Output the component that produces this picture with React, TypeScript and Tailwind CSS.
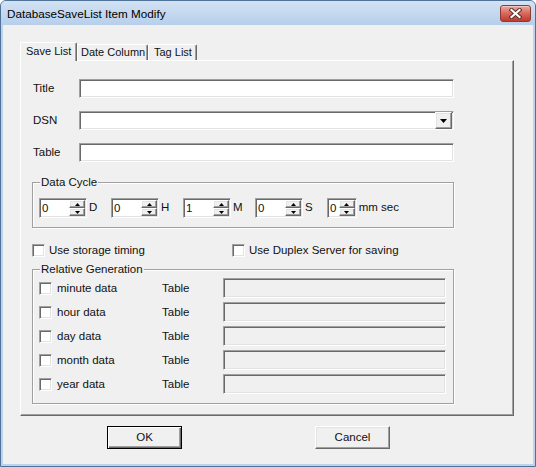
import React from 'react';

// classic 3D edges
const sunken =
  'border border-t-[#a0a0a0] border-l-[#a0a0a0] border-r-white border-b-white shadow-[inset_1px_1px_0_#696969,inset_-1px_-1px_0_#e3e3e3]';
const raised =
  'border border-t-white border-l-white border-r-[#696969] border-b-[#696969] shadow-[inset_-1px_-1px_0_#a0a0a0,inset_1px_1px_0_#e3e3e3]';
const etched = 'border border-[#a0a0a0] shadow-[inset_1px_1px_0_#fff,1px_1px_0_#fff]';

const CloseButton = () => (
  <div className="w-[31px] h-[17px] rounded-[3px] border border-[#8a3b33] bg-gradient-to-b from-[#e9a99f] via-[#d7685b] to-[#c0392b] shadow-[inset_0_1px_0_#f3c9c2] flex items-center justify-center">
    <svg width="13" height="11" viewBox="0 0 13 11">
      <path d="M2.5 2 L10.5 9 M10.5 2 L2.5 9" stroke="#5a2a26" strokeWidth="4" strokeLinecap="square" />
      <path d="M2.5 2 L10.5 9 M10.5 2 L2.5 9" stroke="#ffffff" strokeWidth="2.2" strokeLinecap="square" />
    </svg>
  </div>
);

const Arrow = ({ up }: { up?: boolean }) => (
  <svg width="5" height="3" viewBox="0 0 5 3">
    <path d={up ? 'M2.5 0 L5 3 L0 3 Z' : 'M0 0 L5 0 L2.5 3 Z'} fill="#000" />
  </svg>
);

const Spinner = ({ value }: { value: string }) => (
  <div className={`w-[48px] h-[20px] bg-white flex items-center pl-[2px] pr-px ${sunken}`}>
    <span className="flex-1 leading-[13px]">{value}</span>
    <div className="w-[16px] h-[16px] flex flex-col">
      <div className={`flex-1 bg-[#f0f0f0] flex items-center justify-center ${raised}`}>
        <Arrow up />
      </div>
      <div className={`flex-1 bg-[#f0f0f0] flex items-center justify-center ${raised}`}>
        <Arrow />
      </div>
    </div>
  </div>
);

const CheckBox = () => <div className={`w-[13px] h-[13px] bg-white shrink-0 ${sunken}`} />;

const GroupLabel = ({ text }: { text: string }) => (
  <span className="absolute left-[7px] -top-[7px] bg-[#f0f0f0] px-px leading-[13px]">{text}</span>
);

const cycle = [
  { v: '0', u: 'D' },
  { v: '0', u: 'H' },
  { v: '1', u: 'M' },
  { v: '0', u: 'S' },
  { v: '0', u: 'mm sec' },
];

const relative = ['minute data', 'hour data', 'day data', 'month data', 'year data'];

export default function App() {
  return (
    <div className="w-[536px] h-[467px] font-['Liberation_Sans',Arial,sans-serif] text-[11.5px] text-[#111]">
      <div className="w-full h-full flex flex-col rounded-t-[6px] border border-[#4f7299] bg-[#bdd3ec]">
        {/* Title bar */}
        <div className="h-[24px] flex items-center pl-[6px] pr-[4px] rounded-t-[5px] bg-gradient-to-b from-[#d3e2f4] to-[#b7cfea]">
          <span className="flex-1 text-[11.7px] text-black mt-[2px]">DatabaseSaveList Item Modify</span>
          <div className="self-start mt-[4px]">
            <CloseButton />
          </div>
        </div>

        {/* Client area */}
        <div className="flex-1 mx-[2px] mb-[2px] bg-[#f0f0f0]">
          <div className="pl-[17px] pt-[17px]">
            {/* Tabs */}
            <div className="flex items-end h-[18px] text-[11px]">
              <div className="relative z-10 h-[19px] -mb-px w-[57px] bg-[#f0f0f0] border-t border-l border-white border-r border-r-[#696969] rounded-t-[2px] shadow-[inset_-1px_0_0_#a0a0a0] pl-[5px] pt-[2px] leading-[13px] whitespace-nowrap">
                Save List
              </div>
              <div className="h-[16px] w-[71px] bg-[#f0f0f0] border-t border-l border-white border-r border-r-[#696969] rounded-t-[2px] shadow-[inset_-1px_0_0_#a0a0a0] pl-[3px] leading-[14px] whitespace-nowrap">
                Date Column
              </div>
              <div className="h-[16px] w-[49px] bg-[#f0f0f0] border-t border-l border-white border-r border-r-[#696969] rounded-t-[2px] shadow-[inset_-1px_0_0_#a0a0a0] pl-[5px] leading-[14px] whitespace-nowrap">
                Tag List
              </div>
            </div>

            {/* Tab panel */}
            <div className="w-[494px] h-[356px] border border-t-white border-l-white border-r-[#696969] border-b-[#696969] shadow-[inset_-1px_-1px_0_#a0a0a0] pl-[11px] pt-[18px]">
              <div className="flex items-center h-[19px]">
                <span className="w-[47px] pl-px">Title</span>
                <div className={`w-[375px] h-[19px] bg-white ${sunken}`} />
              </div>
              <div className="flex items-center h-[19px] mt-[13px]">
                <span className="w-[47px] pl-px">DSN</span>
                <div className={`w-[375px] h-[19px] bg-white flex items-center justify-end pr-px ${sunken}`}>
                  <div className={`w-[17px] h-[17px] bg-[#f0f0f0] flex items-center justify-center ${raised}`}>
                    <svg width="7" height="4" viewBox="0 0 7 4">
                      <path d="M0 0 L7 0 L3.5 4 Z" fill="#000" />
                    </svg>
                  </div>
                </div>
              </div>
              <div className="flex items-center h-[19px] mt-[13px]">
                <span className="w-[47px] pl-px">Table</span>
                <div className={`w-[375px] h-[19px] bg-white ${sunken}`} />
              </div>

              {/* Data Cycle */}
              <div className={`relative w-[422px] h-[46px] mt-[20px] pl-[6px] pt-[15px] ${etched}`}>
                <GroupLabel text="Data Cycle" />
                <div className="flex">
                  {cycle.map((c, i) => (
                    <div key={i} className="w-[72px] flex items-center">
                      <Spinner value={c.v} />
                      <span className="ml-[2px] whitespace-nowrap">{c.u}</span>
                    </div>
                  ))}
                </div>
              </div>

              {/* Options */}
              <div className="flex mt-[16px] h-[13px]">
                <div className="w-[200px] flex items-center">
                  <CheckBox />
                  <span className="ml-[4px]">Use storage timing</span>
                </div>
                <div className="flex items-center">
                  <CheckBox />
                  <span className="ml-[4px]">Use Duplex Server for saving</span>
                </div>
              </div>

              {/* Relative Generation */}
              <div className={`relative w-[422px] h-[135px] mt-[12px] pl-[6px] pt-[8px] flex flex-col gap-[4px] ${etched}`}>
                <GroupLabel text="Relative Generation" />
                {relative.map((r) => (
                  <div key={r} className="flex items-center h-[20px]">
                    <CheckBox />
                    <span className="ml-[5px] w-[105px] mt-px">{r}</span>
                    <span className="w-[61px] mt-px">Table</span>
                    <div className={`w-[223px] h-[20px] bg-[#f0f0f0] ${sunken}`} />
                  </div>
                ))}
              </div>
            </div>
          </div>

          {/* Buttons */}
          <div className="flex mt-[10px] pl-[104px]">
            <button className="w-[75px] h-[23px] bg-[#f0f0f0] border border-black shadow-[inset_1px_1px_0_#fff,inset_-1px_-1px_0_#696969,inset_-2px_-2px_0_#a0a0a0] flex items-center justify-center">
              OK
            </button>
            <button className={`ml-[133px] w-[75px] h-[23px] bg-[#f0f0f0] flex items-center justify-center ${raised}`}>
              Cancel
            </button>
          </div>
        </div>
      </div>
    </div>
  );
}
